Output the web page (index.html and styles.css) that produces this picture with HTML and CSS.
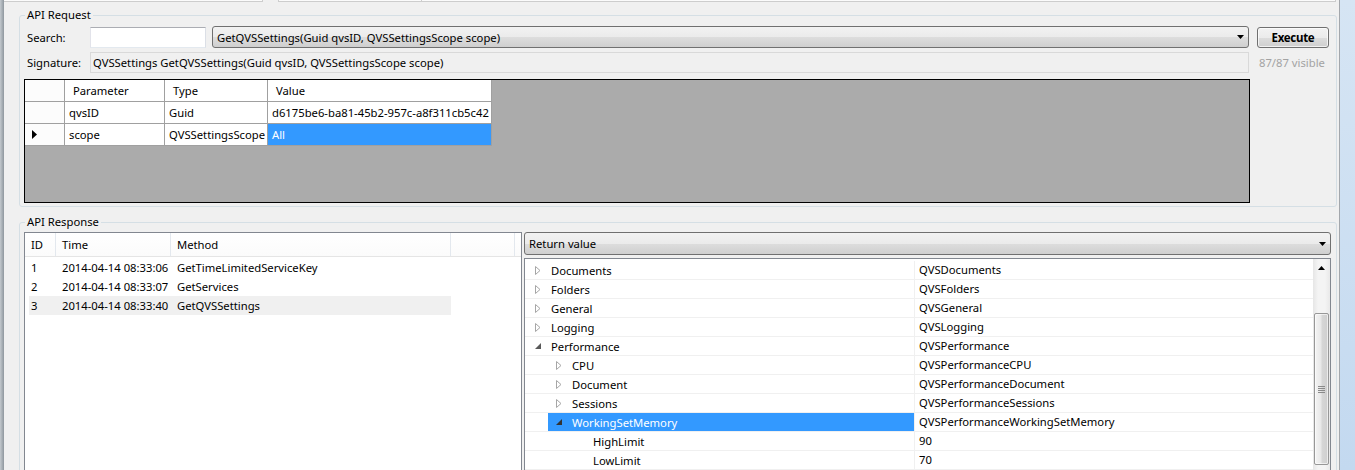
FILE: index.html
```html
<!DOCTYPE html>
<html>
<head>
<meta charset="utf-8">
<link rel="stylesheet" href="styles.css">
</head>
<body>
<div class="window">
  <div class="frame-l"></div>
  <div class="main">
    <div class="tabs"><div class="tab t1"></div><div class="tab t2"></div><div class="tab t3"></div></div>

    <fieldset class="group req">
      <legend>API Request</legend>
      <div class="row r1">
        <label class="lbl">Search:</label>
        <div class="textbox search"></div>
        <div class="combo method">
          <span class="combo-text">GetQVSSettings(Guid qvsID, QVSSettingsScope scope)</span>
          <svg class="arrow" width="7" height="4" viewBox="0 0 7 4"><path d="M0 0h7L3.5 4z" fill="#000"/></svg>
        </div>
        <button class="btn">Execute</button>
      </div>
      <div class="row r2">
        <label class="lbl">Signature:</label>
        <div class="textbox sig">QVSSettings GetQVSSettings(Guid qvsID, QVSSettingsScope scope)</div>
        <span class="count">87/87 visible</span>
      </div>
      <div class="pgrid">
        <div class="ptable">
          <div class="c rh hd"></div>
          <div class="c hd">Parameter</div>
          <div class="c hd">Type</div>
          <div class="c hd">Value</div>

          <div class="c rh"></div>
          <div class="c">qvsID</div>
          <div class="c">Guid</div>
          <div class="c">d6175be6-ba81-45b2-957c-a8f311cb5c42</div>

          <div class="c rh cur"><svg width="5" height="9" viewBox="0 0 5 9"><path d="M0 0L5 4.5L0 9z" fill="#000"/></svg></div>
          <div class="c">scope</div>
          <div class="c">QVSSettingsScope</div>
          <div class="c sel">All</div>
        </div>
      </div>
    </fieldset>

    <fieldset class="group resp">
      <legend>API Response</legend>
      <div class="resp-body">
        <div class="list">
          <div class="lhead">
            <div class="hc w-id">ID</div>
            <div class="hc w-time">Time</div>
            <div class="hc w-method">Method</div>
            <div class="hc w-extra"></div>
          </div>
          <div class="lrows">
            <div class="lrow"><span class="lc l-id">1</span><span class="lc l-time">2014-04-14 08:33:06</span><span class="lc l-method">GetTimeLimitedServiceKey</span></div>
            <div class="lrow"><span class="lc l-id">2</span><span class="lc l-time">2014-04-14 08:33:07</span><span class="lc l-method">GetServices</span></div>
            <div class="lrow active"><span class="lc l-id">3</span><span class="lc l-time">2014-04-14 08:33:40</span><span class="lc l-method">GetQVSSettings</span></div>
          </div>
        </div>

        <div class="rside">
          <div class="combo ret">
            <span class="combo-text">Return value</span>
            <svg class="arrow" width="7" height="4" viewBox="0 0 7 4"><path d="M0 0h7L3.5 4z" fill="#000"/></svg>
          </div>
          <div class="tree">
            <div class="trows">
              <div class="trow"><div class="k"><span class="ind l0"></span><span class="item"><span class="exp"><svg width="6" height="9" viewBox="0 0 6 9"><path d="M0.5 0.5L5 4.5L0.5 8.5z" fill="#fff" stroke="#a6a6a6"/></svg></span><span class="t">Documents</span></span></div><div class="v">QVSDocuments</div></div>
              <div class="trow"><div class="k"><span class="ind l0"></span><span class="item"><span class="exp"><svg width="6" height="9" viewBox="0 0 6 9"><path d="M0.5 0.5L5 4.5L0.5 8.5z" fill="#fff" stroke="#a6a6a6"/></svg></span><span class="t">Folders</span></span></div><div class="v">QVSFolders</div></div>
              <div class="trow"><div class="k"><span class="ind l0"></span><span class="item"><span class="exp"><svg width="6" height="9" viewBox="0 0 6 9"><path d="M0.5 0.5L5 4.5L0.5 8.5z" fill="#fff" stroke="#a6a6a6"/></svg></span><span class="t">General</span></span></div><div class="v">QVSGeneral</div></div>
              <div class="trow"><div class="k"><span class="ind l0"></span><span class="item"><span class="exp"><svg width="6" height="9" viewBox="0 0 6 9"><path d="M0.5 0.5L5 4.5L0.5 8.5z" fill="#fff" stroke="#a6a6a6"/></svg></span><span class="t">Logging</span></span></div><div class="v">QVSLogging</div></div>
              <div class="trow"><div class="k"><span class="ind l0"></span><span class="item"><span class="exp"><svg width="6" height="6" viewBox="0 0 6 6"><path d="M6 0V6H0z" fill="#595959"/></svg></span><span class="t">Performance</span></span></div><div class="v">QVSPerformance</div></div>
              <div class="trow"><div class="k"><span class="ind l1"></span><span class="item"><span class="exp"><svg width="6" height="9" viewBox="0 0 6 9"><path d="M0.5 0.5L5 4.5L0.5 8.5z" fill="#fff" stroke="#a6a6a6"/></svg></span><span class="t">CPU</span></span></div><div class="v">QVSPerformanceCPU</div></div>
              <div class="trow"><div class="k"><span class="ind l1"></span><span class="item"><span class="exp"><svg width="6" height="9" viewBox="0 0 6 9"><path d="M0.5 0.5L5 4.5L0.5 8.5z" fill="#fff" stroke="#a6a6a6"/></svg></span><span class="t">Document</span></span></div><div class="v">QVSPerformanceDocument</div></div>
              <div class="trow"><div class="k"><span class="ind l1"></span><span class="item"><span class="exp"><svg width="6" height="9" viewBox="0 0 6 9"><path d="M0.5 0.5L5 4.5L0.5 8.5z" fill="#fff" stroke="#a6a6a6"/></svg></span><span class="t">Sessions</span></span></div><div class="v">QVSPerformanceSessions</div></div>
              <div class="trow selrow"><div class="k"><span class="ind l1"></span><span class="item sel"><span class="exp"><svg width="6" height="6" viewBox="0 0 6 6"><path d="M6 0V6H0z" fill="#333"/></svg></span><span class="t">WorkingSetMemory</span></span></div><div class="v">QVSPerformanceWorkingSetMemory</div></div>
              <div class="trow"><div class="k"><span class="ind l2"></span><span class="item"><span class="exp"></span><span class="t">HighLimit</span></span></div><div class="v">90</div></div>
              <div class="trow"><div class="k"><span class="ind l2"></span><span class="item"><span class="exp"></span><span class="t">LowLimit</span></span></div><div class="v">70</div></div>
            </div>
            <div class="vscroll">
              <div class="sbtn"><svg width="7" height="4" viewBox="0 0 7 4"><path d="M0 4h7L3.5 0z" fill="#000"/></svg></div>
              <div class="thumb"><span class="grip"></span><span class="grip"></span><span class="grip"></span><span class="grip"></span></div>
            </div>
          </div>
        </div>
      </div>
    </fieldset>
  </div>
  <div class="frame-r"></div>
</div>
</body>
</html>
```

FILE: styles.css
```css
* { box-sizing: border-box; }
html, body { margin: 0; padding: 0; }
body {
  background: #f0f0f0;
  font-family: "Noto Sans", "Open Sans", sans-serif;
  font-size: 11.25px;
  color: #000;
  overflow: hidden;
}
.window { display: flex; height: 470px; overflow: hidden; }
.frame-l { width: 4px; flex: none; background: linear-gradient(90deg, #c3c9ce, #8f979e); }
.frame-r { width: 16px; flex: none; border-left: 1px solid #a3a7ac; background: linear-gradient(180deg, #d6e5f4, #c3d9f0); }
.main { flex: 1; min-width: 0; display: flex; flex-direction: column; }

.tabs { height: 2px; display: flex; flex: none; }
.tab { height: 2px; background: #fbfbfb; border-bottom: 1px solid #cdcdcd; border-right: 1px solid #cdcdcd; }
.t1 { width: 259px; }
.t2 { width: 144px; margin-left: 15px; border-left: 1px solid #cdcdcd; }
.t3 { flex: 1; margin-right: 3px; }

.group {
  margin: 5px 2px 0 15px;
  border: 1px solid #d5dfe5;
  border-radius: 3px;
  min-width: 0;
}
.group legend { margin-left: 1px; padding: 0 2px; line-height: 16px; }
.req { padding: 3px 7px 3px 4px; }
.resp { margin-top: 7px; padding: 2px 5px 0 4px; }

.row { display: flex; align-items: center; }
.r1 { height: 22px; }
.r2 { height: 21px; margin-top: 4px; }
.lbl { width: 66px; padding-left: 3px; flex: none; }
.textbox { background: #fff; border: 1px solid #abadb3; border-color: #abadb3 #dbdfe6 #e3e9ef #e2e3ea; height: 21px; }
.search { width: 116px; flex: none; }
.sig { width: 1159px; flex: none; background: #f0f0f0; border: 1px solid #d9d9d9; padding-left: 2px; line-height: 19px; white-space: nowrap; }
.count { margin-left: 10px; color: #a3a3a3; white-space: nowrap; }

.combo {
  display: flex; align-items: center; justify-content: space-between;
  border: 1px solid #707070; border-radius: 3px;
  background: linear-gradient(180deg, #f2f2f2 0%, #ebebeb 50%, #dddddd 51%, #cfcfcf 100%);
  padding: 0 4px 0 4px; white-space: nowrap;
}
.method { flex: 1; height: 22px; margin-left: 6px; }
.btn {
  width: 72px; height: 21px; margin-left: 8px; flex: none;
  border: 1px solid #707070; border-radius: 3px;
  background: linear-gradient(180deg, #f2f2f2 0%, #ebebeb 50%, #dddddd 51%, #cfcfcf 100%);
  font-family: inherit; font-size: 11.5px; font-weight: bold; color: #000; padding: 0;
  letter-spacing: -0.3px;
  box-shadow: inset 0 0 0 1px rgba(255,255,255,0.7);
}

.pgrid { margin-top: 6px; width: 1226px; height: 124px; border: 1px solid #000; background: #ababab; }
.ptable { display: grid; grid-template-columns: 40px 100px 103px 224px; grid-auto-rows: 22px; width: 467px; }
.c { background: #fff; border-right: 1px solid #a0a0a0; border-bottom: 1px solid #a0a0a0; padding-left: 4px; line-height: 21px; white-space: nowrap; overflow: hidden; }
.c.hd { padding-left: 8px; }
.c.rh { padding-left: 0; background: #fcfcfc; display: flex; align-items: center; }
.c.cur svg { margin-left: 7px; }
.c.sel { background: #3399ff; color: #fff; }

.resp-body { display: flex; gap: 2px; height: 300px; }
.list { width: 498px; flex: none; border: 1px solid #828790; background: #fff; }
.lhead { display: flex; height: 24px; border-bottom: 1px solid #e5e5e5; background: linear-gradient(180deg, #ffffff, #fbfbfb); }
.hc { border-right: 1px solid #e3e8ee; padding-left: 6px; line-height: 23px; flex: none; }
.w-id { width: 31px; }
.w-time { width: 115px; }
.w-method { width: 280px; }
.w-extra { width: 64px; }
.lrows { padding-top: 1px; }
.lrow { display: flex; align-items: center; height: 19px; width: 422px; margin-left: 4px; white-space: nowrap; }
.lrow.active { background: #f0f0f0; }
.lc { flex: none; }
.l-id { width: 27px; padding-left: 2px; }
.l-time { width: 115px; padding-left: 6px; }
.l-method { padding-left: 6px; }

.rside { flex: 1; min-width: 0; display: flex; flex-direction: column; }
.ret { height: 23px; flex: none; padding-left: 4px; padding-right: 4px; }
.tree { margin-top: 3px; flex: 1; border: 1px solid #828790; background: #fff; display: flex; }
.trows { flex: 1; padding-top: 2px; }
.trow { display: flex; height: 19px; border-bottom: 1px solid #f0f0f0; white-space: nowrap; }
.k { width: 390px; flex: none; display: flex; border-right: 1px solid #f0f0f0; }
.ind { flex: none; }
.ind.l0 { width: 2px; }
.ind.l1 { width: 23px; }
.ind.l2 { width: 44px; }
.item { flex: 1; display: flex; align-items: center; }
.item.sel { background: #3399ff; color: #fff; }
.exp { width: 21px; flex: none; display: flex; align-items: center; justify-content: center; }
.t { padding-left: 3px; }
.v { padding-left: 4px; line-height: 18px; }

.vscroll { width: 17px; flex: none; background: linear-gradient(90deg, #e6e6e6, #f4f4f4 30%, #f4f4f4 70%, #e9e9e9); display: flex; flex-direction: column; align-items: center; }
.sbtn { height: 17px; width: 17px; display: flex; align-items: center; justify-content: center; }
.thumb {
  margin-top: 37px; width: 15px; height: 152px; border: 1px solid #979797; border-radius: 2px;
  background: linear-gradient(90deg, #f4f4f4 0%, #e8e8e8 45%, #d6d6d6 55%, #cfcfcf 100%);
  box-shadow: inset 0 0 0 1px rgba(255,255,255,0.6);
  display: flex; flex-direction: column; align-items: center; justify-content: center; gap: 1px;
}
.grip { width: 7px; height: 1px; background: #8a8a8a; }
```
